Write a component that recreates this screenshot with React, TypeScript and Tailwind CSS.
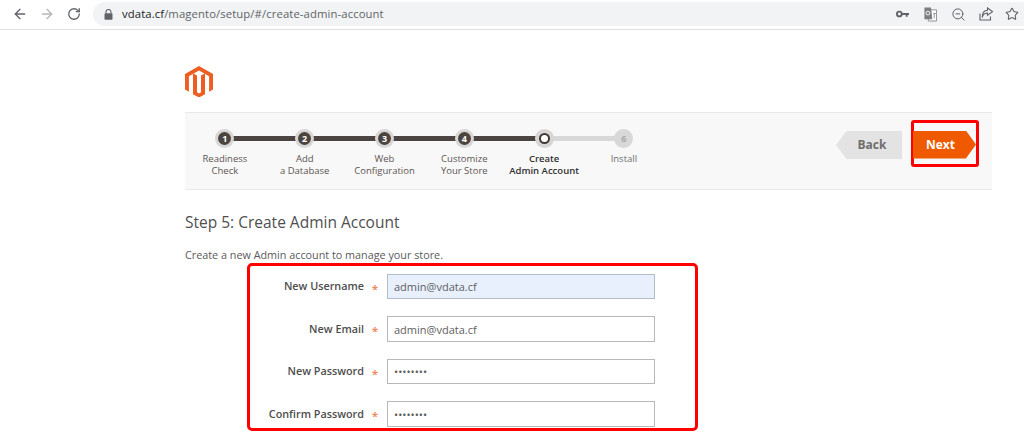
import { FC, ReactNode } from "react";
import { ArrowLeft, ArrowRight, RotateCw, ZoomOut, Star } from "lucide-react";

interface IStep {
  num: string;
  lines: string[];
}

const steps: IStep[] = [
  { num: "1", lines: ["Readiness", "Check"] },
  { num: "2", lines: ["Add", "a Database"] },
  { num: "3", lines: ["Web", "Configuration"] },
  { num: "4", lines: ["Customize", "Your Store"] },
  { num: "5", lines: ["Create", "Admin Account"] },
  { num: "6", lines: ["Install"] },
];

const fields = [
  { label: "New Username", value: "admin@vdata.cf", type: "text", row: "h-[25px] mb-[17px]", input: "bg-[#e8f0fe] border-[#b5bcc9]" },
  { label: "New Email", value: "admin@vdata.cf", type: "text", row: "h-[26px] mb-[17px]", input: "bg-white border-[#b8b8b8]" },
  { label: "New Password", value: "password", type: "password", row: "h-[25px] mb-[17px]", input: "bg-white border-[#b8b8b8]" },
  { label: "Confirm Password", value: "password", type: "password", row: "h-[26px]", input: "bg-white border-[#b8b8b8]" },
];

const LockIcon: FC = () => (
  <svg width="9" height="11" viewBox="0 0 9 11">
    <path d="M2 4.5V3a2.5 2.5 0 0 1 5 0v1.5" fill="none" stroke="#5f6368" strokeWidth="1.1" />
    <rect x="0.5" y="4.2" width="8" height="6.5" rx="0.8" fill="#5f6368" />
  </svg>
);

const KeyIcon: FC = () => (
  <svg width="13" height="8" viewBox="0 0 14 8">
    <circle cx="3.6" cy="4" r="2.6" fill="none" stroke="#5f6368" strokeWidth="2" />
    <path d="M6 3h8v2h-1.5v2h-2V5H6z" fill="#5f6368" />
  </svg>
);

const TranslateIcon: FC = () => (
  <svg width="13" height="15" viewBox="0 0 14 16">
    <path d="M6 3h7.5v12H4.5z" fill="#fff" stroke="#8a8d91" strokeWidth="1" />
    <path d="M0.5 0.5h7L9 13H0.5z" fill="#7b7e82" />
    <circle cx="4.2" cy="6.5" r="2" fill="none" stroke="#fff" strokeWidth="1" />
    <path d="M10 7h3M11 7v5" stroke="#8a8d91" strokeWidth="1" fill="none" />
  </svg>
);

const ShareIcon: FC = () => (
  <svg width="14" height="14" viewBox="0 0 14 14" fill="none" stroke="#5f6368" strokeWidth="1.1">
    <path d="M1 6.5V13h10.5V9.5" />
    <path d="M8.5 1l5 3.6-5 3.6V6C6 6 4 7.5 3.2 10.5 3.2 6.5 5 3.3 8.5 3.2z" />
  </svg>
);

const MagentoLogo: FC = () => (
  <svg width="28" height="31" viewBox="0 0 28 31">
    <path fill="#ec5f20" d="M14 0 28 8v15.5l-3.9 2.2V10.3L14 4.5 3.9 10.3v15.4L0 23.5V8z" />
    <path fill="#ec5f20" d="M12 9.5v16.8l2 1.2 2-1.2V9.5l4-2.2v20.9L14 31.5 8 28.2V7.3z" />
  </svg>
);

const ToolIcon: FC<{ w: string; children: ReactNode }> = ({ w, children }) => (
  <div className={`flex justify-center items-center ${w}`}>{children}</div>
);

const Toolbar: FC = () => (
  <div className="h-[30px] border-b border-[#dfe1e3] bg-white flex items-start">
    <div className="flex items-center h-[28px] w-[93px] pl-[12px] shrink-0">
      <ArrowLeft size={16} color="#5f6368" strokeWidth={2} />
      <ArrowRight size={16} color="#b4b6b8" strokeWidth={2} className="ml-[11px]" />
      <RotateCw size={14} color="#5f6368" strokeWidth={2.2} className="ml-[12px]" />
    </div>
    <div className="mt-[2px] h-[24px] w-[931px] rounded-l-full bg-[#f1f3f4] flex items-center pl-[11px]">
      <LockIcon />
      <span className="ml-[9px] text-[11.3px] tracking-[0.1px] text-[#5f6368]">
        <span className="text-[#202124]">vdata.cf</span>/magento/setup/#/create-admin-account
      </span>
      <div className="ml-auto flex items-center">
        <ToolIcon w="w-[28px]">
          <KeyIcon />
        </ToolIcon>
        <ToolIcon w="w-[28px]">
          <TranslateIcon />
        </ToolIcon>
        <ToolIcon w="w-[28px]">
          <ZoomOut size={15} color="#5f6368" strokeWidth={1.6} />
        </ToolIcon>
        <ToolIcon w="w-[28px]">
          <ShareIcon />
        </ToolIcon>
        <ToolIcon w="w-[24px]">
          <Star size={14} color="#5f6368" strokeWidth={1.8} />
        </ToolIcon>
      </div>
    </div>
  </div>
);

const StepItem: FC<{ step: IStep; index: number }> = ({ step, index }) => {
  const done = index < 4;
  const active = index === 4;
  const todo = index === 5;
  return (
    <div className="relative w-[79.8px] flex flex-col items-center">
      {index < 5 && (
        <div
          className={`absolute left-[50%] top-[7px] h-[5px] w-[79.8px] ${done ? "bg-[#4c4440]" : "bg-[#d8d8d8]"}`}
        />
      )}
      <div
        className={`relative w-[19px] h-[19px] rounded-full flex items-center justify-center ${todo ? "bg-[#d8d8d8]" : "bg-[#d8d6d5]"}`}
      >
        {done && (
          <div className="w-[13px] h-[13px] rounded-full bg-[#4c4440] flex items-center justify-center text-white text-[9px] font-bold leading-none">
            {step.num}
          </div>
        )}
        {active && <div className="w-[11px] h-[11px] rounded-full bg-white border-[2.5px] border-[#3f3835]" />}
        {todo && <span className="text-[9px] font-bold text-[#a9a9a9] leading-none">{step.num}</span>}
      </div>
      <div
        className={`mt-[5px] text-center text-[9.5px] leading-[11.5px] whitespace-nowrap ${
          active ? "text-[#303030] font-semibold" : todo ? "text-[#6f6f6f]" : "text-[#5c5652]"
        }`}
      >
        {step.lines.map((line) => (
          <div key={line}>{line}</div>
        ))}
      </div>
    </div>
  );
};

const Wizard: FC = () => (
  <div className="mt-[16px] h-[78px] w-[807px] bg-[#f8f8f8] border-y border-[#e9e9e9] flex items-start justify-between">
    <div className="flex pt-[16px]">
      {steps.map((step, i) => (
        <StepItem key={step.num} step={step} index={i} />
      ))}
    </div>
    <div className="flex items-start pt-[7px] mr-[13px]">
      <button className="mt-[11px] w-[66px] h-[28px] pl-[6px] bg-[#e3e3e3] text-[#6e6e6e] text-[12px] font-bold [clip-path:polygon(16%_0,100%_0,100%_100%,16%_100%,0_50%)]">
        Back
      </button>
      <div className="ml-[9px] w-[68px] h-[47px] border-[3px] border-[#ff0000] rounded-[3px] flex items-center">
        <button className="ml-[-1px] mt-[2px] w-[64px] h-[28px] pr-[8px] bg-[#ef5a00] text-white text-[12px] font-bold [clip-path:polygon(0_0,84%_0,100%_50%,84%_100%,0_100%)]">
          Next
        </button>
      </div>
    </div>
  </div>
);

const AdminForm: FC = () => (
  <div className="ml-[62px] mt-[1px] w-[451px] h-[168px] border-[3px] border-[#ff0000] rounded-[5px] pt-[8px] overflow-hidden">
    {fields.map((f) => (
      <div key={f.label} className={`flex items-center ${f.row}`}>
        <label className="w-[114px] text-right text-[10.8px] font-semibold text-[#4d4d4d] whitespace-nowrap">
          {f.label}
        </label>
        <span className="w-[23px] pl-[8px] pt-[3px] text-[11px] font-bold leading-none text-[#ef8a5f]">*</span>
        <input
          readOnly
          type={f.type}
          value={f.value}
          className={`w-[268px] h-full border px-[6px] text-[11px] text-[#5e5e5e] outline-none ${f.input}`}
        />
      </div>
    ))}
  </div>
);

const App: FC = () => {
  return (
    <div className="w-[1024px] h-[434px] overflow-hidden bg-white font-['Open_Sans',sans-serif]">
      <Toolbar />
      <div className="pl-[185px]">
        <div className="pt-[36px] h-[66px]">
          <MagentoLogo />
        </div>
        <Wizard />
        <h1 className="mt-[20px] text-[15.5px] leading-[24px] text-[#4f4f4f]">Step 5: Create Admin Account</h1>
        <p className="mt-[13px] text-[10.8px] leading-[15px] text-[#5a5a5a]">
          Create a new Admin account to manage your store.
        </p>
        <AdminForm />
      </div>
    </div>
  );
};

export default App;
